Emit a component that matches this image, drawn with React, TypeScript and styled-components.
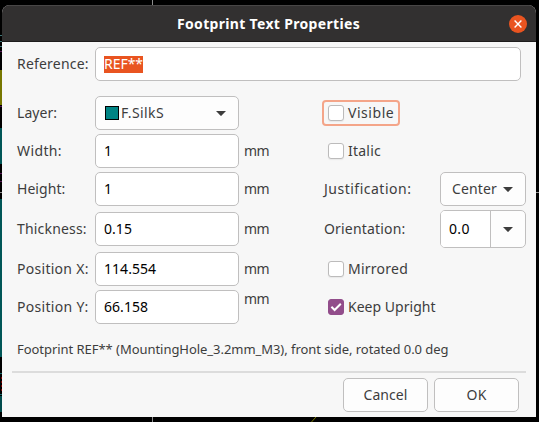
import React from 'react';
import styled, { createGlobalStyle } from 'styled-components';

const GlobalStyle = createGlobalStyle`
  *, *::before, *::after { box-sizing: border-box; }
  body { margin: 0; background: #000; overflow: hidden; }
`;

const Desktop = styled.div`
  position: relative;
  width: 539px;
  height: 422px;
  padding: 5px 3px 5px 2px;
  background: #000;
  font: 14px "Noto Sans", "Open Sans", sans-serif;
  color: #3d3d3d;
`;

const Board = styled.svg`
  position: absolute;
  inset: 0;
`;

const Window = styled.div`
  position: relative;
  display: flex;
  flex-direction: column;
  height: 412px;
  background: #f7f7f7;
  border-radius: 8px 8px 0 0;
  overflow: hidden;
`;

const TitleBar = styled.header`
  display: grid;
  grid-template-columns: 27px 1fr 27px;
  align-items: center;
  height: 37px;
  flex: none;
  background: #323030;
  border-top: 1px solid #484646;
  border-bottom: 1px solid #1e1c1c;
  color: #fff;
  font-weight: 700;
  text-align: center;
`;

const CloseButton = styled.button`
  grid-column: 3;
  display: flex;
  align-items: center;
  justify-content: center;
  width: 18px;
  height: 18px;
  padding: 0;
  border: 0;
  border-radius: 50%;
  background: #e95420;
`;

const Title = styled.div`
  grid-column: 2;
  padding-right: 1px;
  letter-spacing: 0.325px;
`;

const Text = styled.span<{ $track?: number }>`
  display: block;
  padding-bottom: 2px;
  letter-spacing: ${(p) => p.$track ?? 0}px;
  white-space: nowrap;
`;

const ReferenceRow = styled.div`
  display: grid;
  grid-template-columns: 78px 426px;
  align-items: center;
  height: 34px;
  margin: 5px 15px 15px;
`;

const Columns = styled.div`
  display: flex;
  padding-left: 15px;
`;

const FieldGrid = styled.div`
  display: grid;
  grid-template-columns: 78px 144px 85px;
  grid-template-rows: 34px 34px 34px 38px 34px 34px;
  row-gap: 4px;
  align-items: center;
`;

const OptionGrid = styled(FieldGrid)`
  grid-template-columns: 116px 86px;
`;

const Input = styled.div`
  display: flex;
  align-items: center;
  height: 34px;
  padding-left: 8px;
  border: 1px solid #c0bfbf;
  border-radius: 5px;
  background: #fff;
  color: #000;
`;

const Selection = styled.span`
  display: flex;
  align-items: center;
  height: 17px;
  background: #e95420;
  color: #fff;
`;

const Select = styled.div<{ $indent: number; $end: number }>`
  display: flex;
  align-items: center;
  justify-content: space-between;
  height: 34px;
  padding: 0 ${(p) => p.$end}px 0 ${(p) => p.$indent}px;
  border: 1px solid #c0bfbf;
  border-radius: 5px;
  background: #fdfdfd;
`;

const LayerName = styled.span`
  display: flex;
  align-items: center;
  gap: 2px;
`;

const Swatch = styled.span`
  width: 14px;
  height: 14px;
  border: 1px solid #000;
  background: #008484;
`;

const Unit = styled.span<{ $raised?: boolean }>`
  padding-left: 5px;
  padding-bottom: ${(p) => (p.$raised ? 16 : 0)}px;
`;

const ComboBox = styled.div`
  display: grid;
  grid-template-columns: 49px 1fr;
  height: 38px;
  border: 1px solid #c0bfbf;
  border-radius: 5px;
  background: #fdfdfd;
  overflow: hidden;
`;

const ComboValue = styled.div`
  display: flex;
  align-items: center;
  padding-left: 8px;
  background: #fff;
  color: #000;
`;

const ComboArrow = styled.div`
  display: flex;
  align-items: center;
  justify-content: center;
  border-left: 1px solid #c0bfbf;
`;

const Check = styled.div<{ $focused?: boolean }>`
  grid-column: 1 / -1;
  justify-self: start;
  display: flex;
  align-items: center;
  gap: 4px;
  height: 26px;
  margin-left: -2px;
  padding: 0 4px;
  border: 2px solid ${(p) => (p.$focused ? '#f4a589' : 'transparent')};
  border-radius: 4px;
`;

const Box = styled.span<{ $checked?: boolean }>`
  display: flex;
  align-items: center;
  justify-content: center;
  width: 16px;
  height: 16px;
  border: 1px solid ${(p) => (p.$checked ? '#924d8b' : '#bcbbbb')};
  border-radius: 3px;
  background: ${(p) => (p.$checked ? '#924d8b' : '#fff')};
  box-shadow: ${(p) => (p.$checked ? 'none' : '0 1px 1px #e8e8e8')};
`;

const Summary = styled.div`
  height: 47px;
  padding: 16px 0 0 15px;
  font-size: 13px;
  line-height: 18px;
  letter-spacing: -0.045px;
`;

const Divider = styled.div`
  height: 2px;
  margin: 0 10px;
  background: #dcdcdc;
`;

const Actions = styled.footer`
  display: flex;
  justify-content: flex-end;
  gap: 6px;
  padding: 5px 17px 0 0;
`;

const Button = styled.button`
  width: 85px;
  height: 34px;
  padding: 0;
  border: 1px solid #c0bfbf;
  border-radius: 5px;
  background: #fdfdfd;
  font: inherit;
  color: inherit;
`;

const Arrow = () => (
  <svg width="10" height="5" viewBox="0 0 10 5">
    <path d="M0 0H10L5.6 4.6Q5 5.2 4.4 4.6Z" fill="#3d3d3d" />
  </svg>
);

type OptionProps = { label: string; track: number; checked?: boolean; focused?: boolean };

const Option = ({ label, track, checked, focused }: OptionProps) => (
  <Check $focused={focused}>
    <Box $checked={checked}>
      {checked && (
        <svg width="12" height="10" viewBox="0 0 12 10">
          <path d="M1.4 4.8L4.6 8L10.8 1.8" fill="none" stroke="#fff" strokeWidth="2" />
        </svg>
      )}
    </Box>
    <Text $track={track}>{label}</Text>
  </Check>
);

type MeasureProps = { label: string; track: number; value: string; raised?: boolean };

const Measure = ({ label, track, value, raised }: MeasureProps) => (
  <>
    <Text $track={track}>{label}</Text>
    <Input><Text $track={0.04}>{value}</Text></Input>
    <Unit $raised={raised}><Text $track={-0.5}>mm</Text></Unit>
  </>
);

export default function App() {
  return (
    <Desktop>
      <GlobalStyle />
      <Board width="539" height="422">
        <g shapeRendering="crispEdges">
          <path d="M152.5 0V5M152.5 417V422M536 192.5H539M0 192.5H2" stroke="#8c8c8c" />
          <path d="M0 35.5H2M0 41.5H2M0 46.5H2" stroke="#3f7577" />
          <path d="M0 51.5H2M0 106.5H2M0 173.5H2M0 181.5H2" stroke="#571657" />
          <rect y="70" width="2" height="35" fill="#777700" />
          <rect y="128" width="2" height="36" fill="#005657" />
          <rect y="199" width="2" height="158" fill="#005657" />
          <path d="M0 373.5H2M0 394.5H2" stroke="#176b6c" />
          <path d="M1 377V392" stroke="#790000" strokeDasharray="2 2" />
          <rect y="396" width="2" height="16" fill="#004b4c" />
        </g>
        <path d="M311.5 422L316 417" stroke="#777700" />
      </Board>
      <Window>
        <TitleBar>
          <Title>Footprint Text Properties</Title>
          <CloseButton aria-label="Close">
            <svg width="8" height="8" viewBox="0 0 8 8">
              <path d="M.6 .6L7.4 7.4M7.4 .6L.6 7.4" stroke="#fff" strokeWidth="1.4" />
            </svg>
          </CloseButton>
        </TitleBar>
        <ReferenceRow>
          <Text $track={0.2}>Reference:</Text>
          <Input><Selection><Text $track={-0.04}>REF**</Text></Selection></Input>
        </ReferenceRow>
        <Columns>
          <FieldGrid>
            <Text $track={0.04}>Layer:</Text>
            <Select $indent={9} $end={12}>
              <LayerName><Swatch /><Text $track={0.39}>F.SilkS</Text></LayerName>
              <Arrow />
            </Select>
            <span />
            <Measure label="Width:" track={0.38} value="1" />
            <Measure label="Height:" track={0.05} value="1" />
            <Measure label="Thickness:" track={0.18} value="0.15" />
            <Measure label="Position X:" track={0.28} value="114.554" />
            <Measure label="Position Y:" track={0.3} value="66.158" raised />
          </FieldGrid>
          <OptionGrid>
            <Option label="Visible" track={0.55} focused />
            <Option label="Italic" track={0.23} />
            <Text $track={0.5}>Justification:</Text>
            <Select $indent={11} $end={12}><Text $track={0.145}>Center</Text><Arrow /></Select>
            <Text $track={0.18}>Orientation:</Text>
            <ComboBox>
              <ComboValue><Text $track={0.35}>0.0</Text></ComboValue>
              <ComboArrow><Arrow /></ComboArrow>
            </ComboBox>
            <Option label="Mirrored" track={0.25} />
            <Option label="Keep Upright" track={0.03} checked />
          </OptionGrid>
        </Columns>
        <Summary>Footprint REF** (MountingHole_3.2mm_M3), front side, rotated 0.0 deg</Summary>
        <Divider />
        <Actions>
          <Button><Text $track={0.07}>Cancel</Text></Button>
          <Button><Text $track={0.2}>OK</Text></Button>
        </Actions>
      </Window>
    </Desktop>
  );
}
